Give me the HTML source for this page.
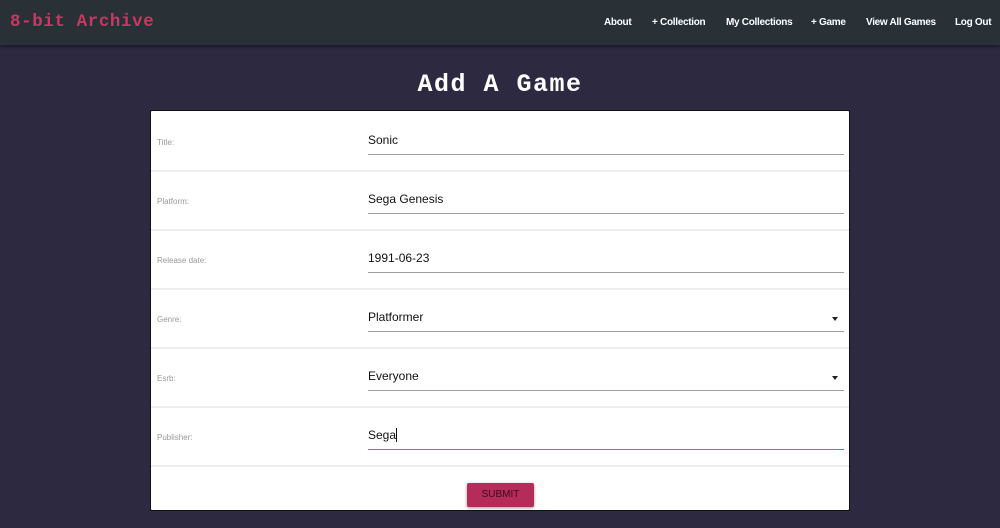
<!DOCTYPE html>
<html><head><meta charset="utf-8"><style>
*{margin:0;padding:0;box-sizing:border-box}
body{width:1000px;height:528px;background:#2c2940;font-family:"Liberation Sans",sans-serif;overflow:hidden;position:relative}
.nav{position:absolute;left:0;top:0;width:1000px;height:45px;background:#293036;box-shadow:0 2px 3px rgba(0,0,0,.4)}
.logo{position:absolute;left:10px;top:12px;font-family:"Liberation Mono",monospace;font-weight:bold;font-size:17.5px;color:#d0355f;text-shadow:1px 1px 0 #0a3a3a;letter-spacing:0.6px}
.links{position:absolute;top:17px;font-size:10px;font-weight:bold;color:#fff;letter-spacing:-0.3px}
.links span{position:absolute;white-space:nowrap}
h1{position:absolute;left:0;width:1000px;top:70px;text-align:center;font-family:"Liberation Mono",monospace;font-weight:bold;font-size:25px;color:#fff;letter-spacing:1.5px}
.card{position:absolute;left:150px;top:110px;width:700px;height:401px;background:#fff;border-radius:2px;border:1px solid #111}
.row{position:absolute;left:0;width:698px;height:59px;border-bottom:2px solid #eee}
.lab{position:absolute;left:6px;font-size:8px;color:#999}
.inp{position:absolute;left:217px;width:476px;border-bottom:1px solid #9e9e9e;font-size:12px;color:#111;height:25px}
.inp span{position:absolute;left:0;top:3px}
.arr{position:absolute;right:6px;top:10px;width:0;height:0;border-left:3.5px solid transparent;border-right:3.5px solid transparent;border-top:4px solid #222}
.btn{position:absolute;left:316px;top:372px;width:67px;height:24px;background:#b52b59;color:#3a0d1d;font-size:10px;text-align:center;line-height:24px;border-radius:2px;box-shadow:0 1px 3px rgba(0,0,0,.4)}
</style></head><body>
<div class="nav"><div class="logo">8-bit Archive</div>
<div class="links">
<span style="left:604px">About</span>
<span style="left:652px">+ Collection</span>
<span style="left:726px">My Collections</span>
<span style="left:811px">+ Game</span>
<span style="left:866px">View All Games</span>
<span style="left:955px">Log Out</span>
</div></div>
<h1>Add A Game</h1>
<div class="card">
<div class="row" style="top:0;height:61px"><div class="lab" style="top:27px">Title:</div><div class="inp" style="top:19px"><span>Sonic</span></div></div>
<div class="row" style="top:61px"><div class="lab" style="top:25px">Platform:</div><div class="inp" style="top:17px"><span>Sega Genesis</span></div></div>
<div class="row" style="top:120px"><div class="lab" style="top:25px">Release date:</div><div class="inp" style="top:17px"><span>1991-06-23</span></div></div>
<div class="row" style="top:179px"><div class="lab" style="top:25px">Genre:</div><div class="inp" style="top:17px"><span>Platformer</span><div class="arr"></div></div></div>
<div class="row" style="top:238px"><div class="lab" style="top:25px">Esrb:</div><div class="inp" style="top:17px"><span>Everyone</span><div class="arr"></div></div></div>
<div class="row" style="top:297px"><div class="lab" style="top:25px">Publisher:</div><div class="inp" style="top:17px;border-bottom:1px solid #26a69a"><span>Sega<span style="position:static;border-right:1px solid #111"></span></span></div></div>
<div class="btn">SUBMIT</div>
</div>
</body></html>
